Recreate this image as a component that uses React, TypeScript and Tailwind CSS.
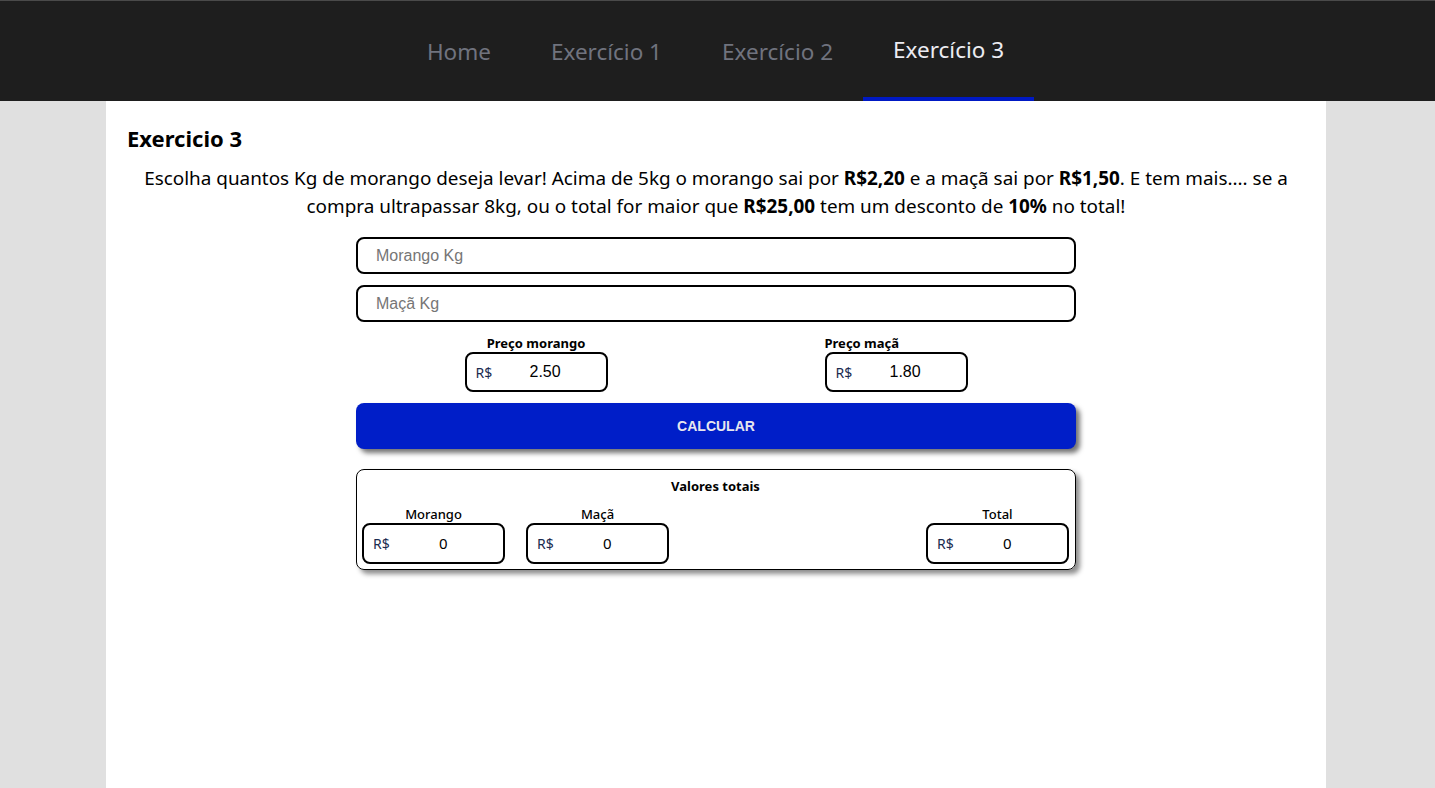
import React from "react";

const seg = { fontFamily: '"Noto Sans", "Open Sans", sans-serif' };
const arial = { fontFamily: '"Liberation Sans", Arial, sans-serif' };

const navItems = [
  { label: "Home", active: false },
  { label: "Exercício 1", active: false },
  { label: "Exercício 2", active: false },
  { label: "Exercício 3", active: true },
];

function MoneyBox({ value }: { value: string }) {
  return (
    <div className="flex h-[40px] w-[143px] items-center rounded-[8px] border-2 border-black bg-white pl-[9px]">
      <span className="w-[54px] text-[14px] text-[#1a2b50]" style={seg}>
        R$
      </span>
      <span className="text-[16px] text-black" style={arial}>
        {value}
      </span>
    </div>
  );
}

function TotalBox({ label, value }: { label: string; value: string }) {
  return (
    <div className="flex flex-col items-center">
      <span className="text-[13px] font-medium leading-[17px] text-black" style={seg}>
        {label}
      </span>
      <div className="flex h-[41px] w-[143px] items-center rounded-[8px] border-2 border-black bg-white pl-[9px]">
        <span className="w-[66px] text-[14px] text-[#1a2b50]" style={seg}>
          R$
        </span>
        <span className="text-[15px] text-black" style={seg}>
          {value}
        </span>
      </div>
    </div>
  );
}

export default function App() {
  return (
    <div className="min-h-[788px] bg-[#e0e0e0]" style={seg}>
      <nav className="flex h-[101px] justify-center border-t border-[#4a4a4a] bg-[#1e1e1e] pr-[4px]">
        {navItems.map((item) => (
          <div
            key={item.label}
            className={`flex items-center justify-center px-[30px] text-[22.5px] ${
              item.active
                ? "border-b-4 border-[#0019c4] pt-[1px] text-[#ececf2]"
                : "pt-[2px] text-[#70737e]"
            }`}
          >
            {item.label}
          </div>
        ))}
      </nav>

      <main className="ml-[106px] min-h-[687px] w-[1220px] bg-white px-[21px] pt-[22px]">
        <h1 className="text-[22px] font-bold leading-[30px] text-black">Exercicio 3</h1>
        <p className="mt-[11px] text-center text-[18.9px] leading-[28px] text-black">
          Escolha quantos Kg de morango deseja levar! Acima de 5kg o morango sai por{" "}
          <b>R$2,20</b> e a maçã sai por <b>R$1,50</b>. E tem mais.... se a compra
          ultrapassar 8kg, ou o total for maior que <b>R$25,00</b> tem um desconto de{" "}
          <b>10%</b> no total!
        </p>

        <div className="mx-auto mt-[17px] flex w-[720px] flex-col">
          <input
            placeholder="Morango Kg"
            className="h-[37px] rounded-[8px] border-2 border-black px-[18px] text-[16px] placeholder:text-[#767676] outline-none"
            style={arial}
          />
          <input
            placeholder="Maçã Kg"
            className="mt-[11px] h-[37px] rounded-[8px] border-2 border-black px-[18px] text-[16px] placeholder:text-[#767676] outline-none"
            style={arial}
          />

          <div className="mt-[12px] grid grid-cols-2">
            <div className="flex flex-col items-center">
              <span className="text-[13px] font-bold leading-[18px] text-black">
                Preço morango
              </span>
              <MoneyBox value="2.50" />
            </div>
            <div className="flex justify-center">
              <div className="flex w-[143px] flex-col">
                <span className="text-[13px] font-bold leading-[18px] text-black">
                  Preço maçã
                </span>
                <MoneyBox value="1.80" />
              </div>
            </div>
          </div>

          <button
            className="mt-[11px] h-[46px] rounded-[8px] bg-[#001ec8] text-[14px] font-bold text-[#e6e6ee] shadow-[4px_4px_5px_rgba(0,0,0,0.55)]"
            style={arial}
          >
            CALCULAR
          </button>

          <div className="mt-[20px] h-[101px] rounded-[8px] border border-black pl-[5px] pr-[6px] pt-[7px] shadow-[4px_4px_5px_rgba(0,0,0,0.45)]">
            <div className="text-center text-[13px] font-bold leading-[18px] text-black">
              Valores totais
            </div>
            <div className="mt-[11px] flex justify-between">
              <div className="flex gap-[21px]">
                <TotalBox label="Morango" value="0" />
                <TotalBox label="Maçã" value="0" />
              </div>
              <TotalBox label="Total" value="0" />
            </div>
          </div>
        </div>
      </main>
    </div>
  );
}
